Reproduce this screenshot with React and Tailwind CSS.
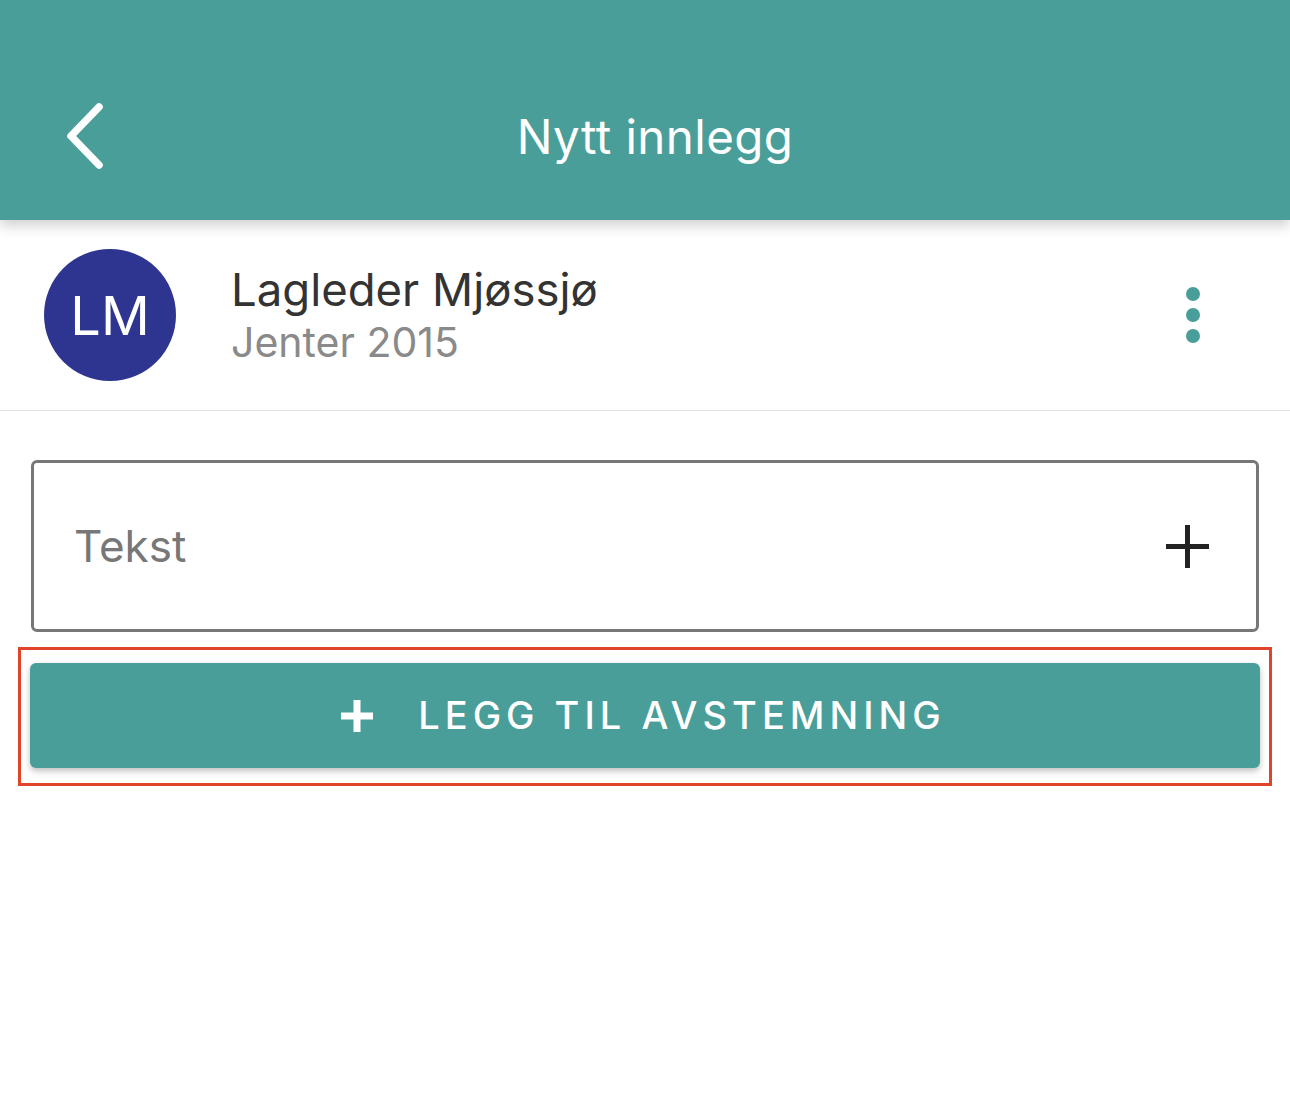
import React from 'react'

const teal = 'bg-[#4a9e9a]'

function BackChevron() {
  return (
    <svg width="44" height="70" viewBox="0 0 44 70" fill="none">
      <path d="M37 6 L9 35 L37 64" stroke="white" strokeWidth="7.5" strokeLinecap="round" strokeLinejoin="round" />
    </svg>
  )
}

export default function App() {
  return (
    <div className="min-h-[1119px] w-[1290px] bg-white font-['Inter','Roboto',sans-serif]">
      <header className={`relative z-10 flex h-[220px] items-center ${teal} shadow-[0_6px_12px_rgba(0,0,0,0.18)]`}>
        <div className="absolute left-[62px] top-[101px]">
          <BackChevron />
        </div>
        <h1 className="w-full pl-[20px] pt-[54px] text-center text-[47.5px] font-normal tracking-[0.4px] text-white">Nytt innlegg</h1>
      </header>

      <div className="flex h-[191px] items-center border-b border-[#e2e2e2] pl-[44px] pr-[90px]">
        <div className="flex h-[132px] w-[132px] items-center justify-center rounded-full bg-[#2e3590]">
          <span className="text-[54px] font-normal text-white">LM</span>
        </div>
        <div className="ml-[55px] flex flex-1 flex-col">
          <span className="text-[45.5px] leading-[54px] text-[#333]">Lagleder Mjøssjø</span>
          <span className="text-[41px] leading-[50px] text-[#8a8a8a]">Jenter 2015</span>
        </div>
        <div className="flex flex-col gap-[7px]">
          <span className="block h-[14px] w-[14px] rounded-full bg-[#4a9e9a]" />
          <span className="block h-[14px] w-[14px] rounded-full bg-[#4a9e9a]" />
          <span className="block h-[14px] w-[14px] rounded-full bg-[#4a9e9a]" />
        </div>
      </div>

      <div className="px-[18px] pt-[49px]">
        <div className="mx-[13px] flex h-[172px] items-center justify-between rounded-[6px] border-[3px] border-[#777] pl-[40px] pr-[47px]">
          <span className="text-[44px] text-[#777]">Tekst</span>
          <svg width="43" height="43" viewBox="0 0 43 43">
            <path d="M21.5 0 V43 M0 21.5 H43" stroke="#222" strokeWidth="5" />
          </svg>
        </div>

        <div className="mt-[15px] border-[3px] border-[#e0452c] px-[9px] pb-[15px] pt-[13px]">
          <button
            type="button"
            className={`flex h-[105px] w-full items-center justify-center rounded-[6px] ${teal} shadow-[0_3px_6px_rgba(0,0,0,0.25)]`}
          >
            <svg width="34" height="34" viewBox="0 0 34 34" className="mr-[44px]">
              <path d="M17 1 V33 M1 17 H33" stroke="white" strokeWidth="7" />
            </svg>
            <span className="pr-[4px] text-[38px] font-medium tracking-[5px] text-white">LEGG TIL AVSTEMNING</span>
          </button>
        </div>
      </div>
    </div>
  )
}
